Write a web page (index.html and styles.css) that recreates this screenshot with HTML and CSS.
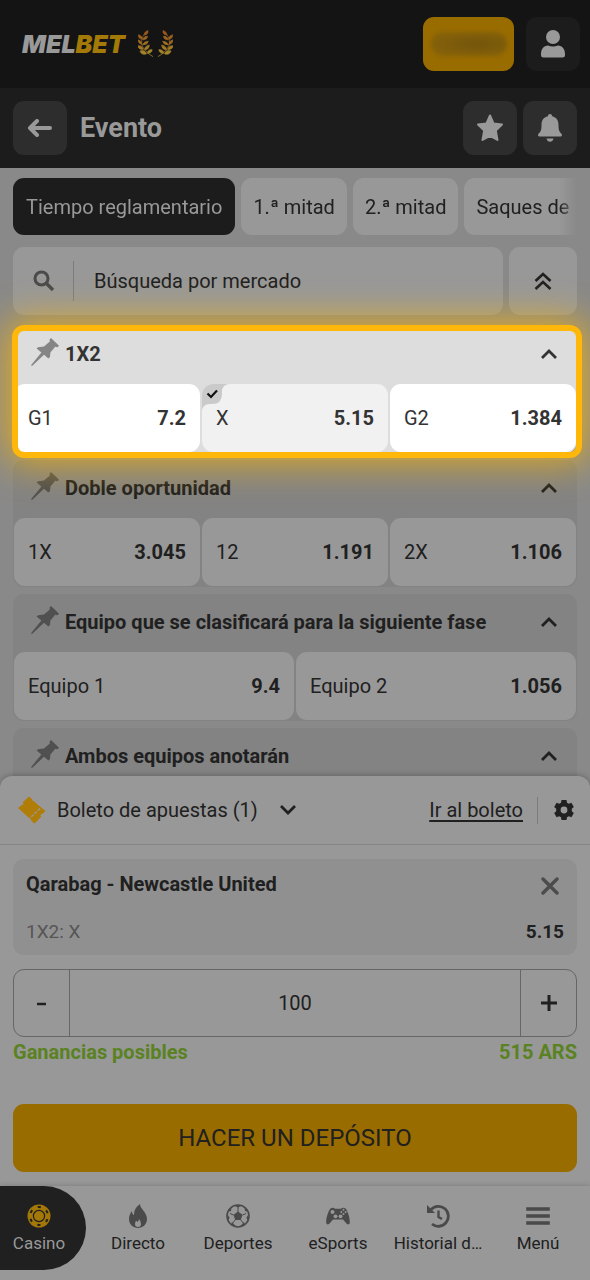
FILE: index.html
```
<!DOCTYPE html>
<html lang="es">
<head>
<meta charset="utf-8">
<meta name="viewport" content="width=device-width, initial-scale=1">
<title>Evento</title>
<link rel="stylesheet" href="styles.css">
</head>
<body>
<svg class="defs" aria-hidden="true">
  <linearGradient id="bronze" gradientUnits="userSpaceOnUse" x1="0" y1="0" x2="0" y2="30"><stop offset="0" stop-color="#98501a"/><stop offset="1" stop-color="#a5902c"/></linearGradient>
  <symbol id="pin" viewBox="0 0 28 28"><path d="M0 27.2 10.4 14.4 5.6 10.6 7 9.2 13 8.6 18.8 3.6 18.6 1.4 20 0 28 7.8 26.6 9.2 24.2 8.8 19.4 14.6 19 19 17.4 20.6 13 16.8 1 28Z"/></symbol>
  <symbol id="up" viewBox="0 0 18 12"><path d="M2 10 9 3l7 7" fill="none" stroke="currentColor" stroke-width="2.8"/></symbol>
  <symbol id="laurel" viewBox="0 0 18 30">
    <path d="M7 4C1 12 3 21 16 28.500" fill="none" stroke="url(#bronze)" stroke-width=".8"/>
    <path fill="url(#bronze)" stroke="url(#bronze)" stroke-width=".7" d="M6.500 5.500q0-4 4-5 1 4-4 5zM4.500 10q-5-1-4-5 4 1 4 5zM5 10.500q1-4 5-4 0 4-5 4zM4 15.500q-4-1-4-5 4 1 4 5zM5 16q1-4 6-4-1 4-6 4zM5.500 21q-5 0-6-4 5-1 6 4zM7 21q0-4 5-5 0 5-5 5zM9 25.500q-5 2-7-3 5-2 7 3zM10 25q0-4 5-4 0 4-5 4z"/>
  </symbol>
</svg>
<div class="app">
  <header class="topbar">
    <a class="brand" href="#" aria-label="MELBET">
      <span class="wordmark">MEL<b>BET</b></span>
      <span class="laurels"><svg><use href="#laurel"/></svg><svg class="flip"><use href="#laurel"/></svg></span>
    </a>
    <div class="actions">
      <button class="balance" type="button" aria-label="Saldo"><span class="hidden-sum"></span></button>
      <button class="tile tile-dark" type="button" aria-label="Perfil">
        <svg width="26" height="28" viewBox="0 0 26 28"><circle cx="13" cy="7" r="7"/><path d="M1 24c0-5 3-8.500 7-8.500q5 2 10 0c4 0 7 3.500 7 8.500v1q0 2.500-2.500 2.500h-19Q1 27.500 1 25z"/></svg>
      </button>
    </div>
  </header>

  <div class="eventbar">
    <button class="tile" type="button" aria-label="Volver">
      <svg width="26" height="18" viewBox="0 0 26 18"><path d="M10 2 3 9l7 7M3 9h20" fill="none" stroke="currentColor" stroke-width="4" stroke-linecap="round" stroke-linejoin="round"/></svg>
    </button>
    <h1>Evento</h1>
    <button class="tile" type="button" aria-label="Favorito">
      <svg width="28" height="28" viewBox="0 0 28 28"><path d="M14 1.500 17.500 9.500 26 10.500 19.800 16.500 21.500 26 14 21.800 6.500 26 8.200 16.500 2 10.500 10.500 9.500Z" stroke="currentColor" stroke-width="2" stroke-linejoin="round"/></svg>
    </button>
    <button class="tile" type="button" aria-label="Notificaciones">
      <svg width="26" height="28" viewBox="0 0 26 28"><path d="M13 0q2 0 2.200 2.300C19.500 3.300 21.500 6.500 21.500 11c0 5.500 1 7 3.200 9q.8 2.500-1.200 2.500h-21Q.5 22.500 1.300 20c2.200-2 3.200-3.500 3.200-9 0-4.500 2-7.700 6.300-8.700Q11 0 13 0zM9.500 24.500h7q-.8 3.300-3.500 3.300t-3.500-3.300z"/></svg>
    </button>
  </div>

  <main class="markets">
    <div class="tabs">
      <button class="tab tab-active" type="button">Tiempo reglamentario</button>
      <button class="tab" type="button">1.ª mitad</button>
      <button class="tab" type="button">2.ª mitad</button>
      <button class="tab tab-last" type="button">Saques de</button>
    </div>

    <div class="searchrow">
      <label class="search">
        <svg class="line" width="22" height="22" viewBox="0 0 22 22"><circle cx="8.500" cy="8.500" r="6.500" stroke-width="3"/><path d="m13.500 13.500 6.500 6.500" stroke-width="3.400"/></svg>
        <input type="search" placeholder="Búsqueda por mercado" aria-label="Búsqueda por mercado">
      </label>
      <button class="collapse" type="button" aria-label="Contraer todo">
        <svg class="line" width="18" height="18" viewBox="0 0 18 18" stroke-width="2.600"><path d="m1.500 9 7.500-7 7.500 7M1.500 17 9 10l7.500 7"/></svg>
      </button>
    </div>

    <section class="market market-spot">
      <h2><svg class="pin"><use href="#pin"/></svg><span>1X2</span><svg class="chev"><use href="#up"/></svg></h2>
      <div class="odds">
        <button type="button"><span>G1</span><b>7.2</b></button>
        <button type="button" class="picked">
          <svg class="tick" width="28" height="28" viewBox="0 0 28 28"><path class="tick-bg" d="M0 0h28q-8 0-8 8v2q0 10-10 10H8q-8 0-8 8z"/><path d="m5.500 9.500 3.500 3.500 6-6.500" fill="none" stroke="#111" stroke-width="2.200"/></svg>
          <span>X</span><b>5.15</b></button>
        <button type="button"><span>G2</span><b>1.384</b></button>
      </div>
    </section>

    <section class="market">
      <h2><svg class="pin"><use href="#pin"/></svg><span>Doble oportunidad</span><svg class="chev"><use href="#up"/></svg></h2>
      <div class="odds">
        <button type="button"><span>1X</span><b>3.045</b></button>
        <button type="button"><span>12</span><b>1.191</b></button>
        <button type="button"><span>2X</span><b>1.106</b></button>
      </div>
    </section>

    <section class="market">
      <h2><svg class="pin"><use href="#pin"/></svg><span>Equipo que se clasificará para la siguiente fase</span><svg class="chev"><use href="#up"/></svg></h2>
      <div class="odds">
        <button type="button"><span>Equipo 1</span><b>9.4</b></button>
        <button type="button"><span>Equipo 2</span><b>1.056</b></button>
      </div>
    </section>

    <section class="market">
      <h2><svg class="pin"><use href="#pin"/></svg><span>Ambos equipos anotarán</span><svg class="chev"><use href="#up"/></svg></h2>
    </section>
  </main>

  <section class="slip">
    <div class="sliphead">
      <svg class="ticket" width="28" height="28" viewBox="0 0 28 28"><path d="M0 12 3 9.500Q5 9.500 5.500 7.500L4.500 6.500 11 .5 14 3q0 2 2.500 2.500L19.500 8.500 27.500 15 25 17.500q-2 0-2.500 2l.5 1.500L16.500 27.500 13.500 25q0-2-2-2.500L9.500 20.500Z"/><path d="M22 12.500 11.500 22.500" stroke="#989898" stroke-width="1.400" stroke-dasharray="3 1.500"/></svg>
      <button class="sliptoggle" type="button">Boleto de apuestas (1)<svg class="chev down"><use href="#up"/></svg></button>
      <a href="#">Ir al boleto</a>
      <button class="settings" type="button" aria-label="Ajustes">
        <svg width="20" height="20" viewBox="0 0 20 20"><path fill-rule="evenodd" d="M7.500 0h5l.5 2.700 1.800 1L17.400 2.800l2.400 4.200-2 1.800v2.400l2 1.800-2.400 4.200-2.600-.9-1.800 1-.5 2.700h-5L7 17.300l-1.800-1-2.600.9L.2 13l2-1.800V8.800L.2 7l2.400-4.200 2.600.9 1.800-1zM10 6.600a3.400 3.400 0 1 0 0 6.800 3.400 3.400 0 0 0 0-6.800z"/></svg>
      </button>
    </div>
    <div class="slipbody">
      <article class="bet">
        <div class="betrow">
          <strong>Qarabag - Newcastle United</strong>
          <button class="remove" type="button" aria-label="Quitar"><svg width="18" height="18" viewBox="0 0 18 18"><path d="m2 2 14 14M16 2 2 16" stroke="currentColor" stroke-width="3.400" stroke-linecap="round"/></svg></button>
        </div>
        <div class="betrow betmeta"><span>1X2: X</span><b>5.15</b></div>
      </article>
      <div class="stake">
        <button type="button" aria-label="Reducir"><svg width="18" height="18" viewBox="0 0 18 18"><path d="M4 10h9" stroke="currentColor" stroke-width="2.600"/></svg></button>
        <input type="text" inputmode="decimal" value="100" aria-label="Importe">
        <button type="button" aria-label="Aumentar"><svg width="18" height="18" viewBox="0 0 18 18"><path d="M1 9h16M9 1v16" stroke="currentColor" stroke-width="3"/></svg></button>
      </div>
      <p class="gain"><span>Ganancias posibles</span><span>515 ARS</span></p>
      <button class="deposit" type="button">HACER UN DEPÓSITO</button>
    </div>
  </section>

  <nav class="nav">
    <a href="#" class="nav-active">
      <svg viewBox="0 0 24 24"><circle cx="12" cy="12" r="11.500"/><circle cx="12" cy="12" r="5.600" fill="none" stroke="#202020" stroke-width="1.200"/><circle cx="12" cy="12" r="9" fill="none" stroke="#202020" stroke-width="2" stroke-dasharray="3.200 6.225" stroke-dashoffset="-3.100"/></svg>
      <span>Casino</span></a>
    <a href="#">
      <svg viewBox="0 0 24 24"><path fill-rule="evenodd" d="M14 0c0 5 7 8 7 15 0 5-4 9-9 9s-9-3.500-9-9c0-3.500 1.500-6 3-8 0 2 .5 3.500 2 4 0-5 2-8 6-11zM13 15q0 2-1.500 3-.5-1-1.500-1.200Q9 18.500 9 20q0 3 3 3t3-3q0-3-2-5z"/></svg>
      <span>Directo</span></a>
    <a href="#">
      <svg viewBox="0 0 24 24"><circle cx="12" cy="12" r="11" fill="none" stroke="currentColor" stroke-width="1.600"/><path d="m12 7.500 4.500 3.300-1.700 5.200H9.200l-1.700-5.200zM8 1.500l4 2 4-2zM1 9.500l2.500 4L2.500 17zM23 9.500l-2.500 4 1 3.500zM5 20.500l1-2.500 4.500 5zM19 20.500 18 18l-4.500 5zM1.500 8 5 7l.5-3.500zM22.500 8 19 7l-.5-3.500z"/><path d="M12 3v5M7.500 11 4 9.500M16.500 11 20 9.500M9.200 16l-2.500 3M14.800 16l2.500 3" fill="none" stroke="currentColor"/></svg>
      <span>Deportes</span></a>
    <a href="#">
      <svg viewBox="0 0 24 24"><path d="M4 5Q6 3 8 4l1 .8h6L16 4q2-1 4 1c2 3 4 9 3.800 13.500-.2 2.500-2.500 2.500-3.800.5L17 15.500H7L4 19c-1.300 2-3.600 2-3.800-.5C0 14 2 8 4 5z"/><g fill="#989898"><circle cx="6.500" cy="8" r="2"/><circle cx="9.500" cy="12.300" r="1.900"/><circle cx="14.500" cy="12.300" r="1.900"/><circle cx="17.500" cy="5.800" r="1"/><circle cx="17.500" cy="10" r="1"/><circle cx="15.400" cy="7.900" r="1"/><circle cx="19.600" cy="7.900" r="1"/></g></svg>
      <span>eSports</span></a>
    <a href="#">
      <svg viewBox="0 0 24 24"><path d="M5 5.500A10 10 0 1 1 6 20" fill="none" stroke="currentColor" stroke-width="2.800"/><path d="M1 1v8h8z"/><path d="M12.500 6.500V13l3.500 2" fill="none" stroke="currentColor" stroke-width="2.400"/></svg>
      <span>Historial d…</span></a>
    <a href="#">
      <svg viewBox="0 0 24 24"><path d="M2 5h20M2 12h20M2 19h20" stroke="currentColor" stroke-width="3.600" stroke-linecap="square"/></svg>
      <span>Menú</span></a>
  </nav>
</div>
</body>
</html>
```
FILE: styles.css
```
:root {
  --page: #898989;
  --card: #989898;
  --group: #838383;
  --ink: #202020;
  --gold: #996c00;
}
* { box-sizing: border-box; }
body {
  margin: 0;
  background: var(--page);
  color: var(--ink);
  font: 20px/24px Roboto, "Noto Sans", sans-serif;
}
button, input { font: inherit; color: inherit; border: 0; margin: 0; padding: 0; background: none; }
a { color: inherit; }
h1, h2, p { margin: 0; }
b, strong { font-weight: 700; }
svg { display: block; flex: none; fill: currentColor; }
.line { fill: none; stroke: currentColor; }
.defs { position: absolute; width: 0; height: 0; }

.app { display: flex; flex-direction: column; height: 100vh; overflow: hidden; }

.topbar {
  display: flex; align-items: center; justify-content: space-between;
  height: 88px; padding: 0 10px 0 22px; flex: none;
  background: #141414;
}
.brand { display: flex; align-items: center; gap: 13px; text-decoration: none; }
.wordmark { font: italic 900 25px/32px Inter, sans-serif; color: #999; }
.wordmark b { font-weight: 900; color: #a37a08; }
.laurels { display: flex; gap: 1px; }
.laurels svg { width: 17px; height: 28px; overflow: visible; }
.flip { transform: scaleX(-1); }
.actions { display: flex; gap: 12px; }
.balance {
  display: flex; align-items: center; justify-content: center;
  width: 91px; height: 54px; border-radius: 11px; background: var(--gold);
}
.hidden-sum {
  width: 76px; height: 24px; border-radius: 12px; filter: blur(2px);
  background: radial-gradient(ellipse at 62% 50%, #73550c, #866209 80%);
}
.tile {
  display: flex; align-items: center; justify-content: center;
  width: 54px; height: 54px; flex: none;
  border-radius: 11px; background: #2d2d2d; color: #999;
}
.tile-dark { background: #1c1c1c; }

.eventbar {
  display: flex; align-items: center; gap: 6px; flex: none;
  height: 80px; padding: 0 13px;
  background: #1c1c1c; color: #999;
}
.eventbar h1 { flex: 1; padding-left: 7px; font-size: 27px; line-height: 32px; font-weight: 700; }

.markets {
  display: flex; flex-direction: column; flex: 1; min-height: 0;
  padding: 10px 13px 0; overflow: hidden;
}
.markets > * { flex: none; }
.tabs {
  display: flex; gap: 6px; overflow: hidden;
  -webkit-mask-image: linear-gradient(to left, transparent, #000 18px);
  mask-image: linear-gradient(to left, transparent, #000 18px);
}
.tab { flex: none; height: 57px; padding: 0 12px; border-radius: 11px; background: var(--card); }
.tab-active { padding: 0 13px; background: #1c1c1c; color: #999; }
.tab-last { padding-right: 60px; }
.searchrow { display: flex; gap: 6px; margin: 12px 0 11px; }
.search {
  display: flex; align-items: center; flex: 1; height: 68px; padding-left: 20px;
  border-radius: 11px; background: var(--card);
}
.search svg { color: #4a4a4a; }
.search input {
  flex: 1; min-width: 0; height: 40px; margin-left: 18px; padding-left: 20px;
  border-left: 1px solid #7c7c7c; outline: 0; appearance: none;
}
.search input::placeholder { color: var(--ink); opacity: 1; }
.collapse {
  display: flex; align-items: center; justify-content: center;
  width: 68px; height: 68px; border-radius: 11px; background: var(--card);
}

.market { position: relative; margin-bottom: 7px; padding: 0 1px 1px; border-radius: 11px; background: var(--group); }
.market h2 {
  display: flex; align-items: center; height: 58px; padding: 0 18px 2px 17px;
  font-size: 20px; line-height: 24px; font-weight: 700;
}
.market h2 span { flex: 1; padding-left: 6px; }
.pin { width: 28px; height: 28px; margin-bottom: 4px; color: #505050; }
.chev { width: 18px; height: 12px; }
.odds { display: grid; grid-auto-flow: column; grid-auto-columns: 1fr; gap: 2px; }
.odds button {
  position: relative; display: flex; align-items: center; justify-content: space-between;
  height: 68px; padding: 0 14px; border-radius: 11px; background: var(--card); overflow: hidden;
}
.market-spot { z-index: 1; background: #ddd; color: #333; }
.market-spot::after {
  content: ""; position: absolute; inset: -1px -5px -5px -1px;
  border: 6px solid #ffb80a; border-radius: 12px; pointer-events: none;
  box-shadow: 0 0 36px 6px rgba(255, 184, 0, .7);
}
.market-spot .pin { color: #858585; }
.market-spot .odds button { background: #fff; }
.market-spot .odds .picked { background: #f1f1f1; }
.tick { position: absolute; left: 0; top: 0; }
.tick-bg { fill: #cacaca; }

.slip {
  position: relative; z-index: 2; flex: none; margin-top: -12px;
  border-radius: 12px 12px 0 0; background: var(--card);
  box-shadow: 0 0 6px rgba(0, 0, 0, .3);
}
.sliphead {
  display: flex; align-items: center; height: 69px; padding: 0 16px 0 18px;
  border-bottom: 1px solid #858585;
}
.ticket { color: #b07d08; }
.sliptoggle { display: flex; align-items: center; gap: 21px; margin: 0 auto 0 11px; }
.down { transform: scaleY(-1); }
.sliphead a { text-underline-offset: 3px; }
.settings { height: 27px; margin-left: 14px; padding-left: 16px; border-left: 1px solid #7c7c7c; }
.slipbody { padding: 14px 13px; }
.bet { padding: 13px 13px 11px; border-radius: 11px; background: #909090; }
.betrow { display: flex; align-items: center; justify-content: space-between; }
.betmeta { margin-top: 24px; font-size: 19px; }
.betmeta span { color: #565656; }
.remove { padding: 3px 5px 0 0; color: #4c4c4c; }
.stake {
  display: flex; height: 68px; margin-top: 14px;
  border: 1px solid #666; border-radius: 11px; overflow: hidden;
}
.stake button { display: flex; align-items: center; justify-content: center; width: 55px; flex: none; }
.stake input {
  flex: 1; min-width: 0; text-align: center; outline: 0;
  border: solid #666; border-width: 0 1px;
}
.gain { display: flex; justify-content: space-between; margin-top: 3px; color: #5a8222; font-weight: 700; }
.deposit {
  display: block; width: 100%; height: 68px; margin-top: 40px;
  border-radius: 11px; background: var(--gold); font-size: 24px;
}

.nav {
  position: relative; z-index: 3; flex: none;
  display: grid; grid-template-columns: 86px repeat(5, 1fr); gap: 4px;
  padding: 0 4px 10px 0; background: var(--card);
  box-shadow: 0 0 6px rgba(0, 0, 0, .2);
}
.nav a {
  display: flex; flex-direction: column; align-items: center; gap: 4px;
  height: 84px; padding-top: 18px; text-decoration: none;
  font-size: 17px; line-height: 22px; white-space: nowrap;
}
.nav svg { width: 24px; height: 24px; color: #4a4a4a; }
.nav .nav-active { padding-right: 8px; border-radius: 0 42px 42px 0; background: #202020; color: #999; }
.nav .nav-active svg { color: #a37708; }
```
